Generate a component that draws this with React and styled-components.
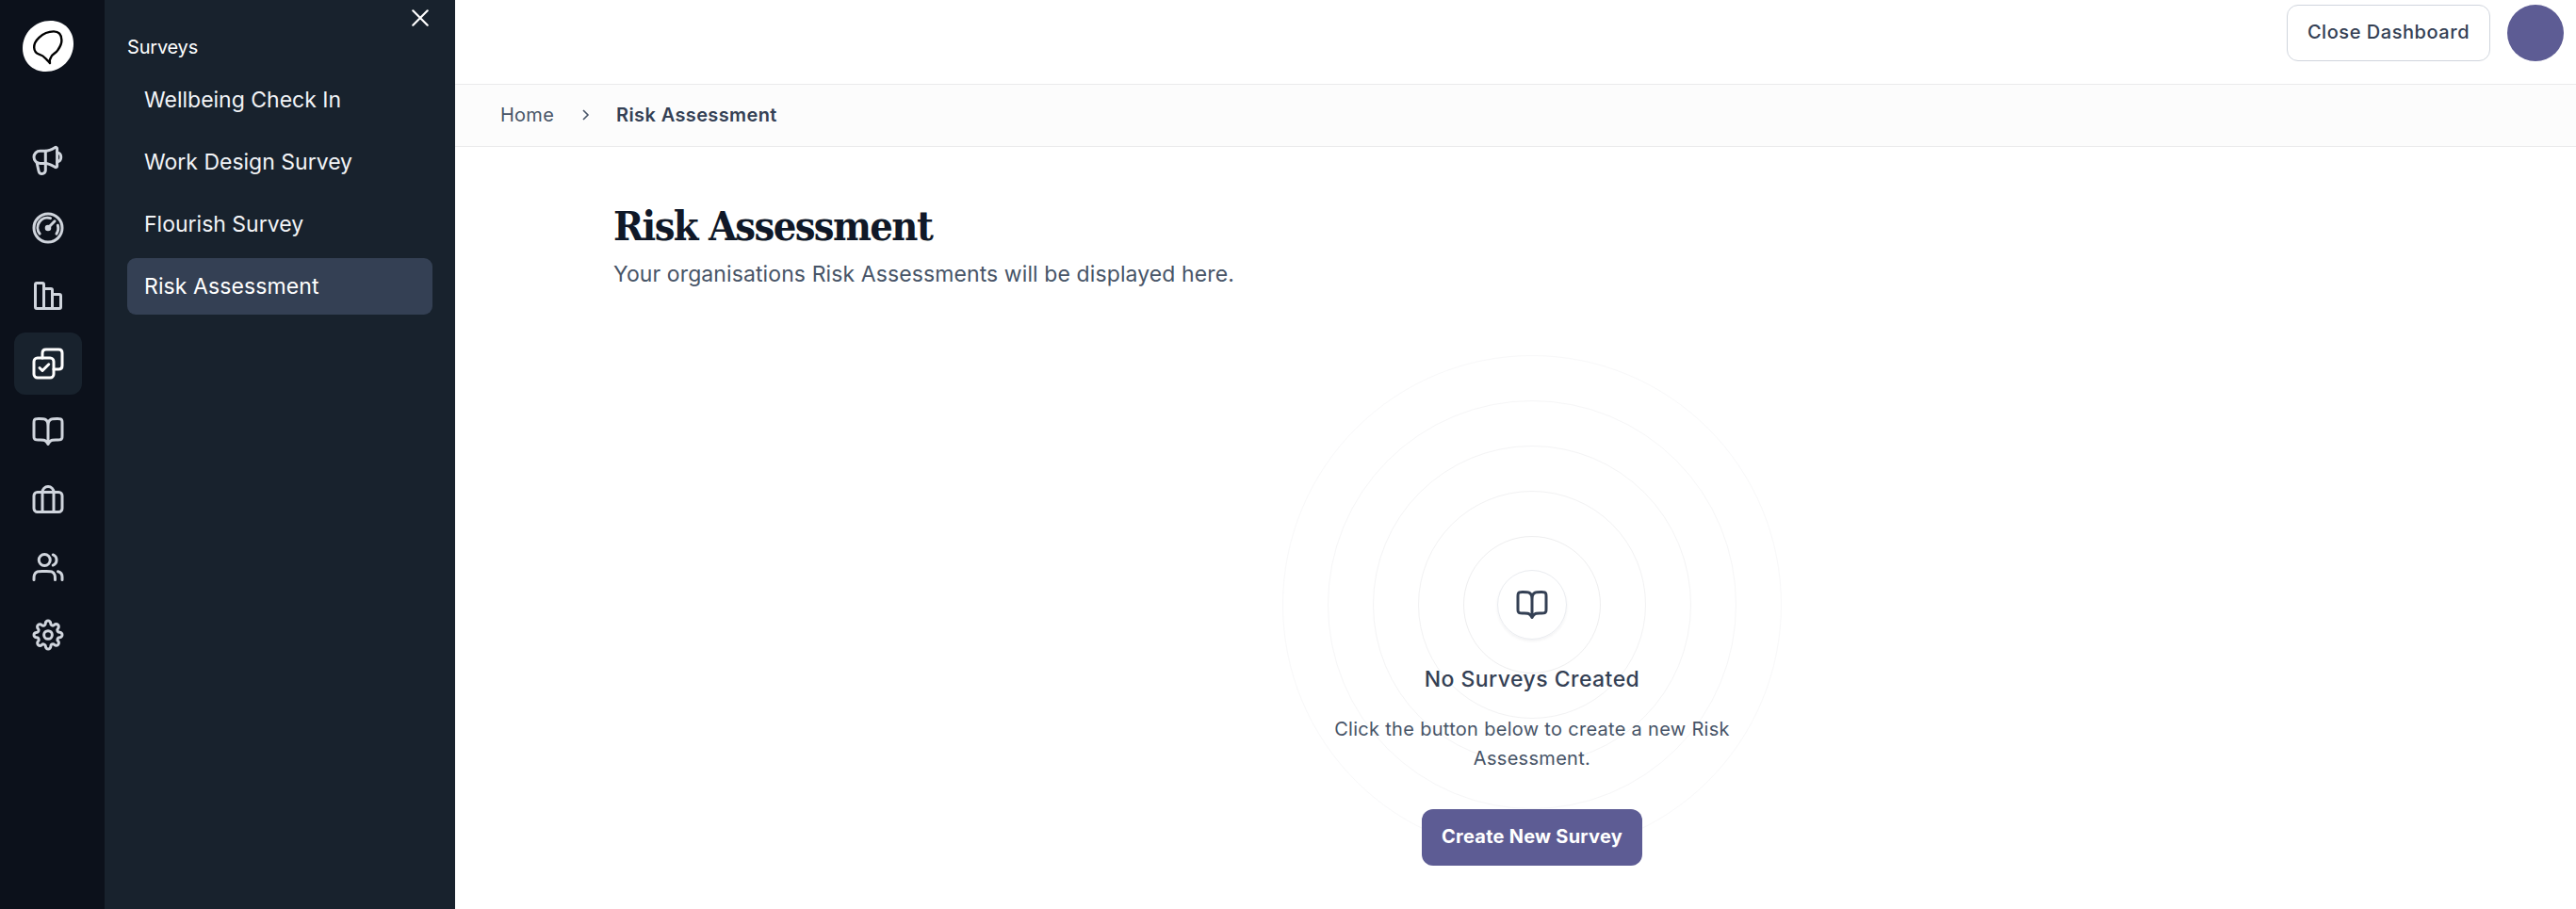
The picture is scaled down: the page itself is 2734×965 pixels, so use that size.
import React from 'react';
import styled, { createGlobalStyle } from 'styled-components';

const GlobalStyle = createGlobalStyle`
  * {
    box-sizing: border-box;
  }
  body {
    margin: 0;
    background: #ffffff;
    font-family: 'Inter', 'Liberation Sans', sans-serif;
  }
  button {
    font-family: inherit;
    cursor: pointer;
  }
`;

const Layout = styled.div`
  display: flex;
  height: 965px;
  overflow: hidden;
`;

const Rail = styled.nav`
  width: 111px;
  flex-shrink: 0;
  padding: 22px 0 0 15px;
  background: #0c111b;
`;

const LogoLink = styled.a`
  display: block;
  width: 54px;
  height: 54px;
  margin: 0 0 61px 9px;
`;

const RailList = styled.div`
  display: flex;
  flex-direction: column;
  gap: 6px;
`;

const RailItem = styled.a`
  display: flex;
  align-items: center;
  justify-content: center;
  width: 72px;
  height: 66px;
  border-radius: 12px;
  color: ${({ $active }) => ($active ? '#ffffff' : '#d0d5dd')};
  background: ${({ $active }) => ($active ? '#18222d' : 'transparent')};
`;

const Panel = styled.aside`
  display: flex;
  flex-direction: column;
  width: 372px;
  flex-shrink: 0;
  padding: 7px 24px 0;
  background: #18222d;
`;

const CloseButton = styled.button`
  align-self: flex-end;
  display: flex;
  align-items: center;
  justify-content: center;
  width: 26px;
  height: 24px;
  padding: 0;
  border: none;
  background: none;
  color: #ffffff;
`;

const PanelTitle = styled.p`
  margin: 4px 0 11px;
  color: #ffffff;
  font-size: 20px;
  font-weight: 400;
  line-height: 30px;
  letter-spacing: -0.2px;
`;

const PanelList = styled.div`
  display: flex;
  flex-direction: column;
  gap: 6px;
`;

const PanelItem = styled.a`
  display: flex;
  align-items: center;
  height: 60px;
  padding-left: 18px;
  border-radius: 9px;
  color: ${({ $active }) => ($active ? '#ffffff' : '#f2f4f7')};
  background: ${({ $active }) => ($active ? '#344054' : 'transparent')};
  font-size: 23px;
  letter-spacing: ${({ $active }) => ($active ? '0.1px' : '0')};
`;

const Main = styled.main`
  flex: 1;
  min-width: 0;
`;

const TopBar = styled.header`
  display: flex;
  justify-content: flex-end;
  gap: 18px;
  height: 89px;
  padding: 5px 13px 0 0;
`;

const OutlineButton = styled.button`
  width: 216px;
  height: 60px;
  padding: 0 0 3px;
  border: 1px solid #d0d5dd;
  border-radius: 12px;
  background: #ffffff;
  color: #344054;
  font-size: 20px;
  font-weight: 550;
  letter-spacing: 0.55px;
`;

const Avatar = styled.div`
  width: 60px;
  height: 60px;
  border-radius: 50%;
  background: #5d5c94;
`;

const Breadcrumbs = styled.div`
  display: flex;
  align-items: center;
  height: 67px;
  padding: 0 0 1px 48px;
  border-top: 1px solid #eaeaec;
  border-bottom: 1px solid #eaeaec;
  background: #fcfcfc;
  font-size: 20px;
`;

const Crumb = styled.span`
  color: ${({ $current }) => ($current ? '#344054' : '#475467')};
  font-weight: ${({ $current }) => ($current ? 600 : 400)};
  letter-spacing: ${({ $current }) => ($current ? '0.38px' : '0.25px')};
`;

const Chevron = styled.svg`
  width: 24px;
  height: 24px;
  margin: 0 20px 0 22px;
  color: #475467;
`;

const Content = styled.section`
  padding: 56px 133px 0 168px;
`;

const Title = styled.h1`
  margin: 0 0 5px;
  color: #101828;
  font-family: 'DejaVu Serif Condensed', 'DejaVu Serif', serif;
  font-size: 43px;
  font-weight: 700;
  line-height: 56px;
  letter-spacing: -1.6px;
`;

const Subtitle = styled.p`
  margin: 0;
  color: #475467;
  font-size: 23px;
  font-weight: 400;
  line-height: 36px;
  letter-spacing: 0.1px;
`;

const EmptyState = styled.div`
  display: flex;
  flex-direction: column;
  align-items: center;
  margin-top: 296px;
`;

const Badge = styled.div`
  position: relative;
  display: flex;
  align-items: center;
  justify-content: center;
  width: 74px;
  height: 74px;
  border: 1px solid #eaecf0;
  border-radius: 50%;
  color: #344054;
  box-shadow: 0 2px 3px rgba(16, 24, 40, 0.05);
`;

/* Concentric rings drawn behind the text, fading outwards */
const Ring = styled.div`
  position: absolute;
  top: 50%;
  left: 50%;
  z-index: -1;
  width: ${({ $size }) => $size}px;
  height: ${({ $size }) => $size}px;
  border: 1px solid ${({ $color }) => $color};
  border-radius: 50%;
  transform: translate(-50%, -50%);
`;

const EmptyTitle = styled.h2`
  margin: 24px 0 20px;
  color: #344054;
  font-size: 23px;
  font-weight: 550;
  line-height: 36px;
  letter-spacing: 0.45px;
`;

const EmptyText = styled.p`
  width: 480px;
  margin: 0 0 38px;
  color: #475467;
  font-size: 20px;
  line-height: 31px;
  letter-spacing: 0.3px;
  text-align: center;
`;

const PrimaryButton = styled.button`
  width: 234px;
  height: 60px;
  padding: 0 0 3px;
  border: none;
  border-radius: 12px;
  background: #5d5c94;
  color: #ffffff;
  font-size: 20px;
  font-weight: 700;
  letter-spacing: 0.25px;
`;

const IconSvg = styled.svg`
  width: 36px;
  height: 36px;
  fill: none;
  stroke: currentColor;
  stroke-width: 2;
  stroke-linecap: round;
  stroke-linejoin: round;
`;

const Icon = ({ children }) => (
  <IconSvg viewBox='0 0 24 24'>{children}</IconSvg>
);

const Logo = () => (
  <svg width='54' height='54' viewBox='0 0 54 54' fill='none'>
    <path
      d='M29.5 0C44 0 54 10 54 24.5C54 41 41 54 24.5 54C10 54 0 43.5 0 29C0 13 13 0 29.5 0Z'
      fill='#ffffff'
    />
    <path
      d='M29 45C28.2 42.5 29.3 40 30.5 38C31.8 35.3 35.5 34.2 37.6 30.8C39.8 27.6 41.6 24.5 41.4 20.5C41.2 14.5 38.5 11.4 33 11.4C27 11.4 21.5 14 17.5 17.8C13.5 21.5 12 24.5 12.2 28.5C12.4 32.5 14 34.5 17.5 35.6C22 36.8 23.5 39 25.5 41.2C26.7 42.6 27.8 43.3 29 45Z'
      stroke='#000000'
      strokeWidth='2.4'
      strokeLinejoin='round'
    />
  </svg>
);

const MegaphoneIcon = () => (
  <Icon>
    <path d='M10.2 5.5H6.4a4.4 4.4 0 0 0 0 8.8h3.8z' />
    <path d='M10.2 5.5c2.6 0 4.8-1.3 6.7-2.4.7-.4 1.5-.1 1.5.8v12.2c0 .9-.8 1.2-1.5.8-1.9-1.1-4.1-2.6-6.7-2.6' />
    <path d='M4.1 13.9l1.3 5.9a2.3 2.3 0 0 0 2.4 1.8 2.4 2.4 0 0 0 2.4-2.4v-4.9M18.4 6.4a3.6 3.6 0 0 1 0 7' />
  </Icon>
);

const GaugeIcon = () => (
  <Icon>
    <circle cx='12' cy='12' r='10' />
    <path d='M6.1 16.1A7 7 0 0 1 13.7 5.1M18.9 10.2a7 7 0 0 1-.9 5.9M12 12l4.7-4.8' />
    <circle cx='12' cy='12' r='1.2' fill='currentColor' />
  </Icon>
);

const BarsIcon = () => (
  <Icon>
    <path d='M9 21V4c0-.6-.4-1-1-1H4c-.6 0-1 .4-1 1v16c0 .6.4 1 1 1h16c.6 0 1-.4 1-1v-8c0-.6-.4-1-1-1h-5M9 7h5c.6 0 1 .4 1 1v13' />
  </Icon>
);

const CheckDoneIcon = () => (
  <Icon>
    <path d='M6 15l2 2 4.5-4.5M8 8V4.5C8 3 9 2 10.5 2h9C21 2 22 3 22 4.5v9c0 1.5-1 2.5-2.5 2.5H16' />
    <rect x='2' y='8' width='14' height='14' rx='2.5' />
  </Icon>
);

const BookIcon = () => (
  <Icon>
    <path d='M12 21l-.1-.15c-.69-1.04-1.04-1.56-1.5-1.94a4 4 0 0 0-1.38-.74C8.45 18 7.83 18 6.57 18H5.2c-1.12 0-1.68 0-2.11-.22a2 2 0 0 1-.87-.87C2 16.48 2 15.92 2 14.8V6.2c0-1.12 0-1.68.22-2.11a2 2 0 0 1 .87-.87C3.52 3 4.08 3 5.2 3h.4c2.24 0 3.36 0 4.22.44a4 4 0 0 1 1.74 1.74C12 6.04 12 7.16 12 9.4M12 21V9.4M12 21l.1-.15c.69-1.04 1.04-1.56 1.5-1.94a4 4 0 0 1 1.38-.74C15.55 18 16.17 18 17.43 18h1.37c1.12 0 1.68 0 2.11-.22a2 2 0 0 0 .87-.87c.22-.43.22-.99.22-2.11V6.2c0-1.12 0-1.68-.22-2.11a2 2 0 0 0-.87-.87C20.48 3 19.92 3 18.8 3h-.4c-2.24 0-3.36 0-4.22.44a4 4 0 0 0-1.74 1.74C12 6.04 12 7.16 12 9.4' />
  </Icon>
);

const LuggageIcon = () => (
  <Icon>
    <rect x='2' y='7' width='20' height='14' rx='2.5' />
    <path d='M8 21V7a4 4 0 0 1 4-4 4 4 0 0 1 4 4v14' />
  </Icon>
);

const UsersIcon = () => (
  <Icon>
    <path d='M22 21V19C22 17.136 20.725 15.57 19 15.126M15.5 3.291C16.966 3.884 18 5.321 18 7C18 8.679 16.966 10.116 15.5 10.709M17 21C17 19.136 17 18.204 16.696 17.469A4 4 0 0 0 14.531 15.305C13.796 15 12.864 15 11 15H8C6.136 15 5.204 15 4.469 15.305A4 4 0 0 0 2.304 17.469C2 18.204 2 19.136 2 21' />
    <circle cx='9.5' cy='7' r='4' />
  </Icon>
);

const SettingsIcon = () => (
  <Icon>
    <g transform='translate(12 12) scale(0.909) translate(-12 -12)' strokeWidth='2.2'>
      <circle cx='12' cy='12' r='3.2' />
      <path d='M19.4 15a1.65 1.65 0 0 0 .33 1.82l.06.06a2 2 0 0 1 0 2.83 2 2 0 0 1-2.83 0l-.06-.06a1.65 1.65 0 0 0-1.82-.33 1.65 1.65 0 0 0-1 1.51V21a2 2 0 0 1-2 2 2 2 0 0 1-2-2v-.09A1.65 1.65 0 0 0 9 19.4a1.65 1.65 0 0 0-1.82.33l-.06.06a2 2 0 0 1-2.83 0 2 2 0 0 1 0-2.83l.06-.06a1.65 1.65 0 0 0 .33-1.82 1.65 1.65 0 0 0-1.51-1H3a2 2 0 0 1-2-2 2 2 0 0 1 2-2h.09A1.65 1.65 0 0 0 4.6 9a1.65 1.65 0 0 0-.33-1.82l-.06-.06a2 2 0 0 1 0-2.83 2 2 0 0 1 2.83 0l.06.06a1.65 1.65 0 0 0 1.82.33H9a1.65 1.65 0 0 0 1-1.51V3a2 2 0 0 1 2-2 2 2 0 0 1 2 2v.09a1.65 1.65 0 0 0 1 1.51 1.65 1.65 0 0 0 1.82-.33l.06-.06a2 2 0 0 1 2.83 0 2 2 0 0 1 0 2.83l-.06.06a1.65 1.65 0 0 0-.33 1.82V9a1.65 1.65 0 0 0 1.51 1H21a2 2 0 0 1 2 2 2 2 0 0 1-2 2h-.09a1.65 1.65 0 0 0-1.51 1z' />
    </g>
  </Icon>
);

const railItems = [
  { id: 'announcements', icon: <MegaphoneIcon /> },
  { id: 'dashboard', icon: <GaugeIcon /> },
  { id: 'reports', icon: <BarsIcon /> },
  { id: 'surveys', icon: <CheckDoneIcon /> },
  { id: 'library', icon: <BookIcon /> },
  { id: 'toolkit', icon: <LuggageIcon /> },
  { id: 'people', icon: <UsersIcon /> },
  { id: 'settings', icon: <SettingsIcon /> },
];

const surveys = ['Wellbeing Check In', 'Work Design Survey', 'Flourish Survey', 'Risk Assessment'];

const rings = [
  { size: 146, color: '#eeeeef' },
  { size: 242, color: '#f2f2f3' },
  { size: 338, color: '#f4f4f5' },
  { size: 434, color: '#f6f6f7' },
  { size: 530, color: '#f8f8f9' },
];

const App = () => {
  return (
    <Layout>
      <GlobalStyle />
      <Rail>
        <LogoLink>
          <Logo />
        </LogoLink>
        <RailList>
          {railItems.map(({ id, icon }) => (
            <RailItem key={id} $active={id === 'surveys'}>
              {icon}
            </RailItem>
          ))}
        </RailList>
      </Rail>
      <Panel>
        <CloseButton>
          <svg width='18' height='18' viewBox='0 0 18 18' fill='none' stroke='currentColor' strokeWidth='2.2' strokeLinecap='round'>
            <path d='M1.3 1.3l15.4 15.4M16.7 1.3L1.3 16.7' />
          </svg>
        </CloseButton>
        <PanelTitle>Surveys</PanelTitle>
        <PanelList>
          {surveys.map((name) => (
            <PanelItem key={name} $active={name === 'Risk Assessment'}>
              {name}
            </PanelItem>
          ))}
        </PanelList>
      </Panel>
      <Main>
        <TopBar>
          <OutlineButton>Close Dashboard</OutlineButton>
          <Avatar />
        </TopBar>
        <Breadcrumbs>
          <Crumb>Home</Crumb>
          <Chevron viewBox='0 0 24 24' fill='none' stroke='currentColor' strokeWidth='1.6'>
            <path d='M9 7l5 5-5 5' />
          </Chevron>
          <Crumb $current>Risk Assessment</Crumb>
        </Breadcrumbs>
        <Content>
          <Title>Risk Assessment</Title>
          <Subtitle>Your organisations Risk Assessments will be displayed here.</Subtitle>
          <EmptyState>
            <Badge>
              {rings.map(({ size, color }) => (
                <Ring key={size} $size={size} $color={color} />
              ))}
              <BookIcon />
            </Badge>
            <EmptyTitle>No Surveys Created</EmptyTitle>
            <EmptyText>
              Click the button below to create a new Risk
              <br />
              Assessment.
            </EmptyText>
            <PrimaryButton>Create New Survey</PrimaryButton>
          </EmptyState>
        </Content>
      </Main>
    </Layout>
  );
};

export default App;
